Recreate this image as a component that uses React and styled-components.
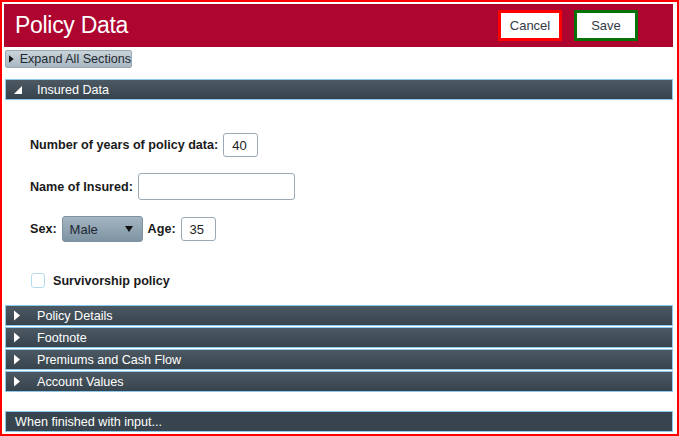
import React from 'react';
import styled, { createGlobalStyle } from 'styled-components';

const GlobalStyle = createGlobalStyle`
  html, body {
    margin: 0;
    padding: 0;
    background: #fff;
  }
  body {
    font-family: "Liberation Sans", Arial, sans-serif;
  }
`;

const Frame = styled.div`
  box-sizing: border-box;
  width: 679px;
  height: 436px;
  border: 2px solid #ff0000;
  padding: 2px 3px 2px 2px;
  display: flex;
  flex-direction: column;
`;

const Header = styled.div`
  height: 43px;
  background: #ae0430;
  display: flex;
  align-items: center;
  padding: 0 0 0 11px;
  margin-right: 1px;
`;

const Title = styled.h1`
  margin: 0;
  flex: 1;
  color: #fff;
  font-size: 23px;
  font-weight: 400;
  letter-spacing: -0.3px;
`;

const HeaderButton = styled.button`
  box-sizing: border-box;
  width: 64px;
  height: 31px;
  margin-right: ${(p) => p.$mr}px;
  background: #fff;
  border: 3px solid ${(p) => p.$color};
  color: #333b45;
  font-family: inherit;
  font-size: 13px;
  padding: 0;
`;

const ExpandButton = styled.button`
  box-sizing: border-box;
  align-self: flex-start;
  margin: 3px 0 0 1px;
  height: 18px;
  width: 127px;
  display: flex;
  align-items: center;
  gap: 6px;
  padding: 0 0 0 3px;
  border: 1px solid #9aa9b3;
  border-radius: 2px;
  background: linear-gradient(#c9d3da, #a9b8c2);
  color: #1f2a33;
  font-family: inherit;
  font-size: 12.6px;
  white-space: nowrap;
`;

const SectionBar = styled.div`
  box-sizing: border-box;
  margin: ${(p) => p.$mt || 0}px 1px 0 1px;
  height: ${(p) => p.$h || 21}px;
  display: flex;
  align-items: center;
  padding-left: ${(p) => p.$pl || 7}px;
  border: 1px solid #8cc8ea;
  background: ${(p) =>
    p.$flat ? '#38454e' : 'linear-gradient(#4c5862, #37444d)'};
  color: #fff;
  font-size: 12.6px;
`;

const Arrow = styled.span`
  width: 24px;
  display: inline-flex;
  align-items: center;
`;

const Form = styled.div`
  padding: 33px 0 0 26px;
  display: flex;
  flex-direction: column;
`;

const FieldRow = styled.div`
  display: flex;
  align-items: center;
  gap: 5px;
  margin-bottom: ${(p) => p.$mb}px;
`;

const Label = styled.label`
  font-size: 12.6px;
  font-weight: 700;
  color: #1a1a1a;
`;

const TextBox = styled.div`
  box-sizing: border-box;
  width: ${(p) => p.$w}px;
  height: ${(p) => p.$h || 24}px;
  border: 1px solid #9aa9b5;
  border-radius: 3px;
  padding: 0 0 0 8px;
  display: flex;
  align-items: center;
  font-size: 13px;
  color: #222;
  background: #fff;
`;

const Select = styled.div`
  box-sizing: border-box;
  width: 81px;
  height: 26px;
  border-radius: 3px;
  border: 1px solid #7d93a3;
  background: linear-gradient(#a5b5c1, #7e94a4);
  display: flex;
  align-items: center;
  justify-content: space-between;
  padding: 0 9px 0 7px;
  font-size: 13px;
  color: #1c2833;
`;

const CheckRow = styled.div`
  display: flex;
  align-items: center;
  gap: 8px;
  margin-top: 31px;
  margin-left: 1px;
`;

const CheckBox = styled.span`
  box-sizing: border-box;
  width: 14px;
  height: 15px;
  border: 1px solid #b4dcee;
  border-radius: 3px;
  background: #fff;
`;

const Sections = styled.div`
  margin-top: 16px;
  display: flex;
  flex-direction: column;
`;

const Tri = ({ dir }) =>
  dir === 'open' ? (
    <svg width="10" height="10" viewBox="0 0 10 10">
      <polygon points="9,1 9,9 1,9" fill="#fff" />
    </svg>
  ) : (
    <svg width="8" height="11" viewBox="0 0 8 11">
      <polygon points="1,0.5 7,5.5 1,10.5" fill="#fff" />
    </svg>
  );

const sections = ['Policy Details', 'Footnote', 'Premiums and Cash Flow', 'Account Values'];

export default function App() {
  return (
    <>
      <GlobalStyle />
      <Frame>
        <Header>
          <Title>Policy Data</Title>
          <HeaderButton $color="#ff0000" $mr={12}>Cancel</HeaderButton>
          <HeaderButton $color="#087208" $mr={35}>Save</HeaderButton>
        </Header>
        <ExpandButton>
          <svg width="5" height="8" viewBox="0 0 5 8">
            <polygon points="0,0 5,4 0,8" fill="#111" />
          </svg>
          Expand All Sections
        </ExpandButton>
        <SectionBar $mt={11}>
          <Arrow><Tri dir="open" /></Arrow>
          Insured Data
        </SectionBar>
        <Form>
          <FieldRow $mb={16}>
            <Label>Number of years of policy data:</Label>
            <TextBox $w={35}>40</TextBox>
          </FieldRow>
          <FieldRow $mb={16}>
            <Label>Name of Insured:</Label>
            <TextBox $w={157} $h={27} />
          </FieldRow>
          <FieldRow $mb={0}>
            <Label>Sex:</Label>
            <Select>
              <span>Male</span>
              <svg width="8" height="6" viewBox="0 0 8 6">
                <polygon points="0,0 8,0 4,6" fill="#111" />
              </svg>
            </Select>
            <Label>Age:</Label>
            <TextBox $w={35}>35</TextBox>
          </FieldRow>
          <CheckRow>
            <CheckBox />
            <Label>Survivorship policy</Label>
          </CheckRow>
        </Form>
        <Sections>
          {sections.map((s) => (
            <SectionBar key={s} $mt={1}>
              <Arrow><Tri /></Arrow>
              {s}
            </SectionBar>
          ))}
        </Sections>
        <SectionBar $mt={19} $h={21} $pl={9} $flat>
          When finished with input...
        </SectionBar>
      </Frame>
    </>
  );
}
